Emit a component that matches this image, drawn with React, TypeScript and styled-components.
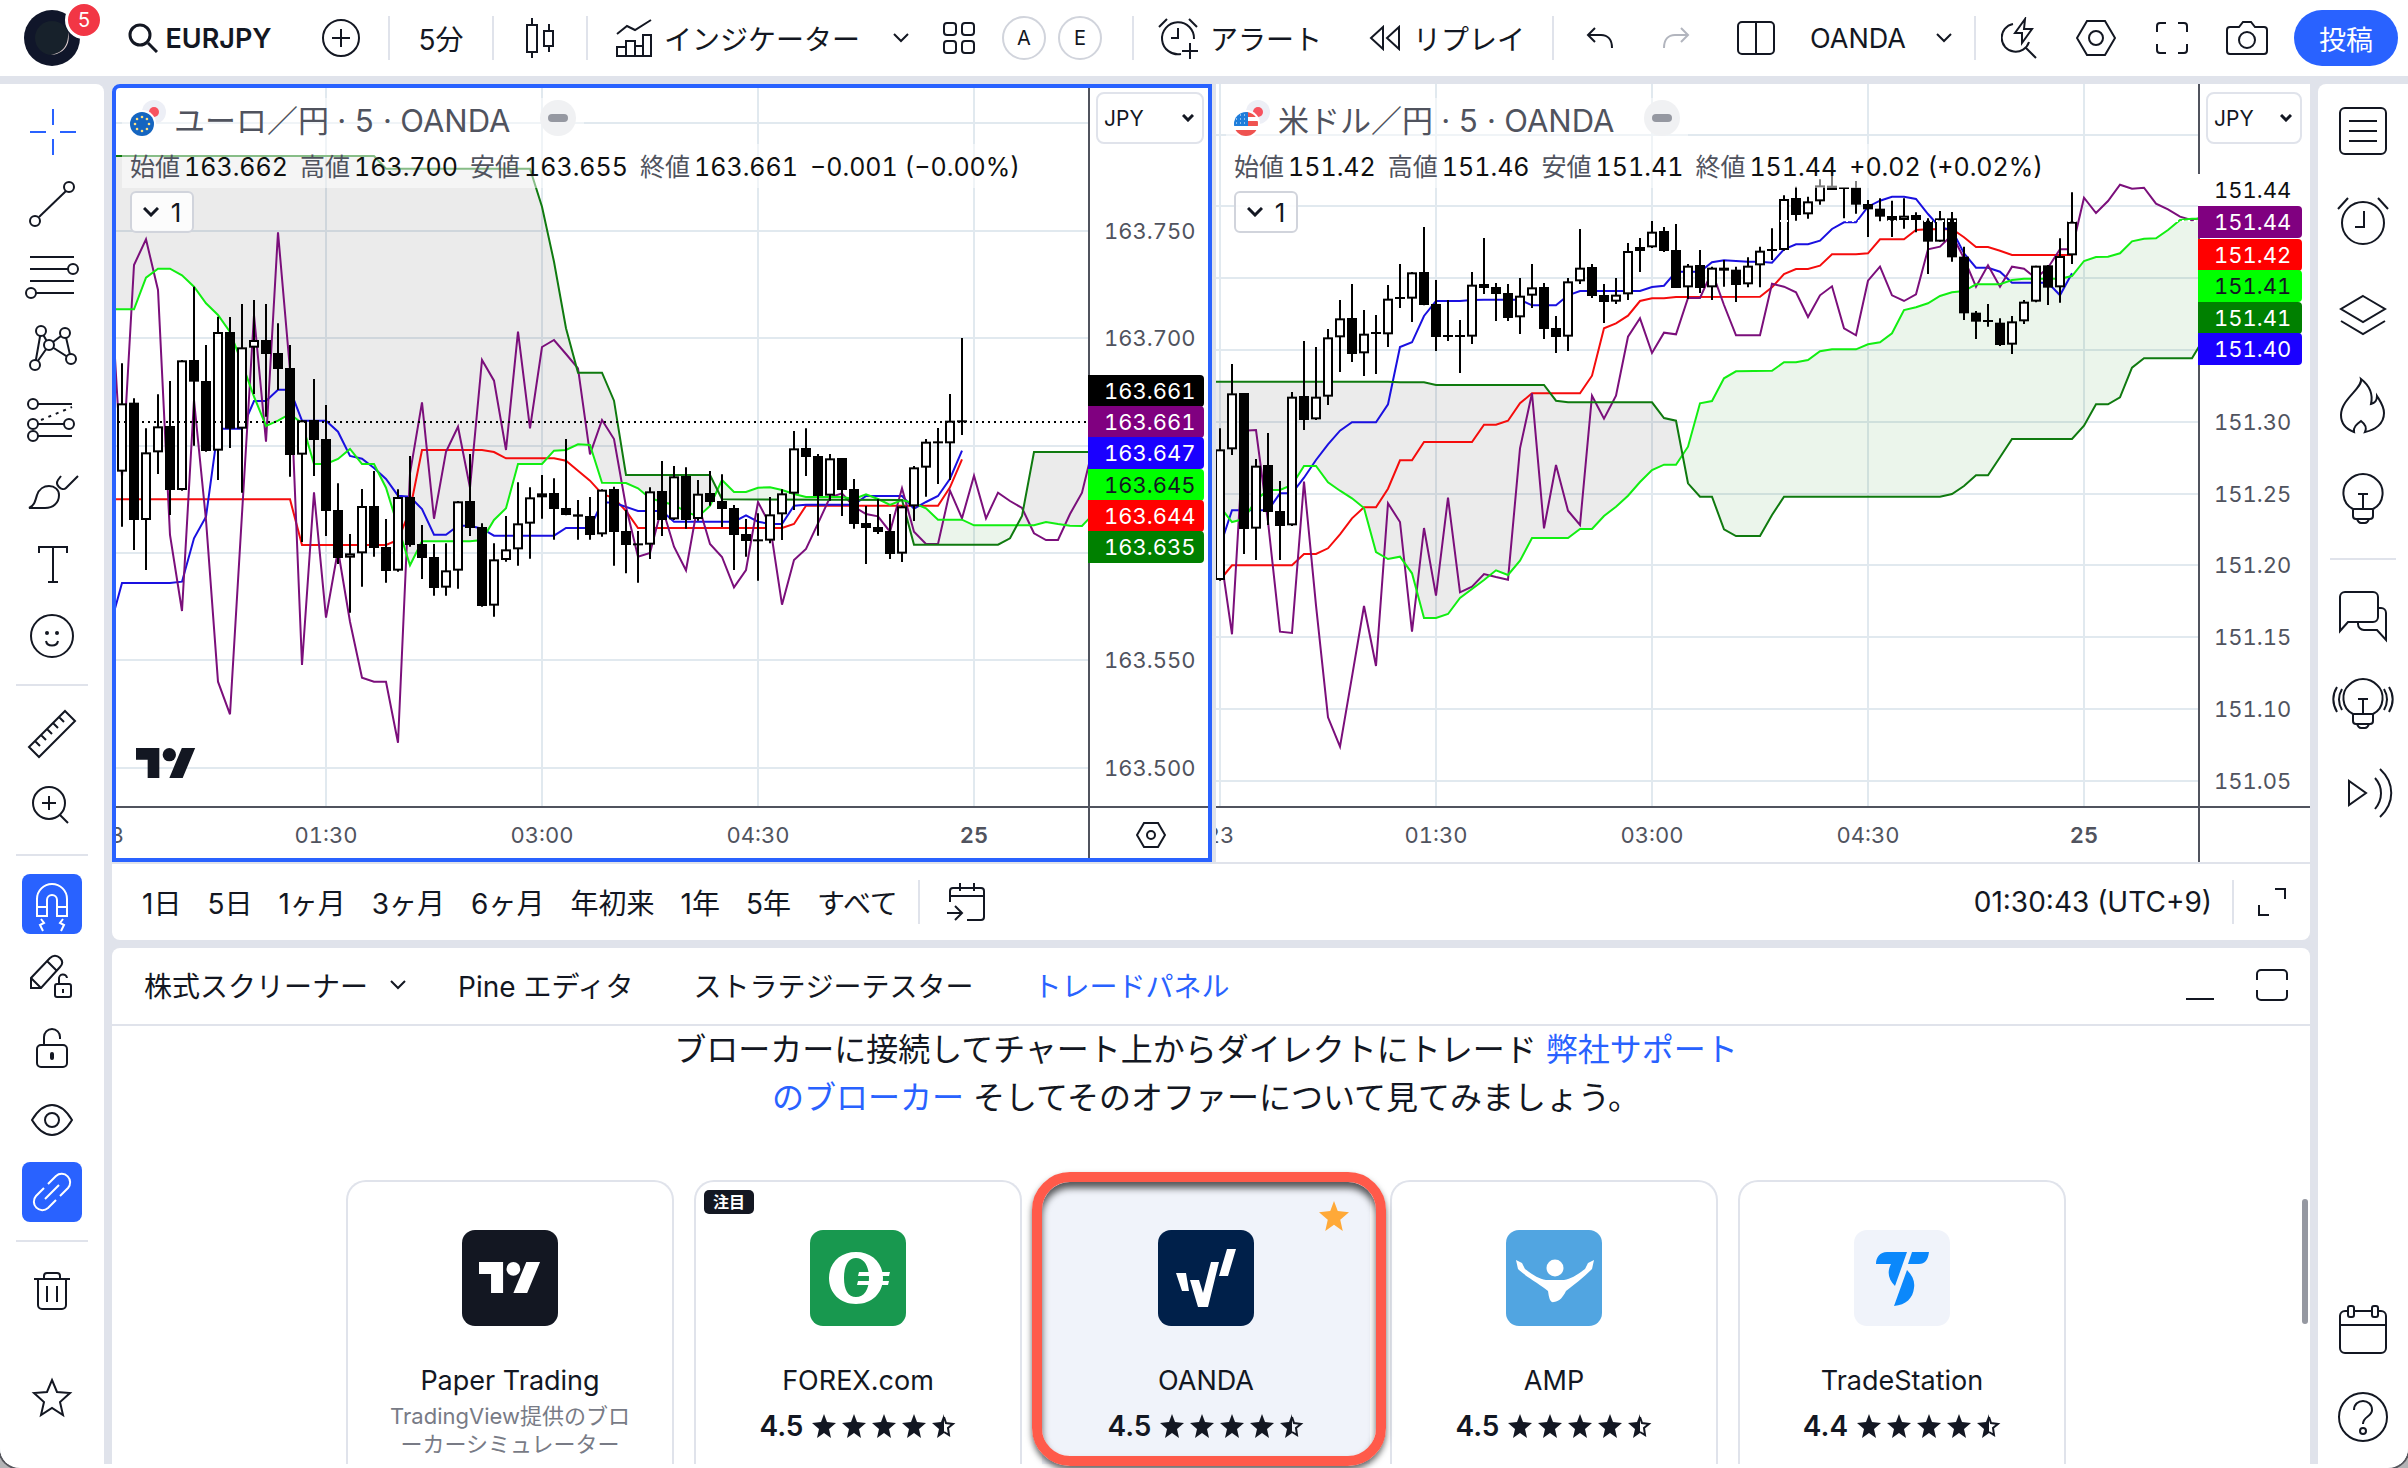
import React from "react";
import styled, { createGlobalStyle, css } from "styled-components";

const ink = "#131722";
const line = "#e0e3eb";
const blue = "#2962ff";
const sans = `Inter, "Noto Sans CJK JP", sans-serif`;

const GlobalStyle = createGlobalStyle`
  * { box-sizing: border-box; }
  html { background: #b4b4b6; }
  body { margin: 0; font-family: ${sans}; color: ${ink}; }
  button, select { font: inherit; color: inherit; background: none; border: 0; padding: 0; margin: 0; cursor: pointer; }
  a { color: ${blue}; text-decoration: none; }
  svg { display: block; flex: none; }
`;

/* ---------- page frame ---------- */

const Shell = styled.div`
  display: flex;
  flex-direction: column;
  height: 100vh;
  padding-bottom: 4px;
  background: #fff;
  border-radius: 0 0 20px 20px;
  box-shadow: 0 0 0 2px #55565c;
  overflow: hidden;
`;

const Body = styled.div`
  flex: 1;
  min-height: 0;
  display: grid;
  grid-template-columns: 104px minmax(0, 1fr) 90px;
  gap: 8px;
  padding-top: 8px;
  background: ${line};
`;

const Center = styled.main`
  display: flex;
  flex-direction: column;
  min-height: 0;
`;

/* ---------- top bar ---------- */

const TopBar = styled.header`
  flex: none;
  display: flex;
  align-items: center;
  height: 76px;
  padding-right: 10px;
  background: #fff;
`;

const BarButton = styled.button<{ $w: number; $gap?: number; $latin?: boolean; $strong?: boolean }>`
  flex: none;
  width: ${(p) => p.$w}px;
  height: 60px;
  display: flex;
  align-items: center;
  justify-content: center;
  gap: ${(p) => p.$gap ?? 0}px;
  font-size: ${(p) => (p.$latin ? 27 : 28)}px;
  font-weight: ${(p) => (p.$strong ? 600 : 400)};
  white-space: nowrap;
`;

const BarDivider = styled.span`
  flex: none;
  width: 2px;
  height: 44px;
  margin: 0 2px;
  background: ${line};
`;

const BarSpace = styled.span`
  flex: 1;
`;

const AvatarButton = styled.button`
  position: relative;
  flex: none;
  width: 104px;
  height: 60px;
  display: flex;
  align-items: center;
  justify-content: center;
`;

const Badge = styled.span`
  position: absolute;
  top: -7px;
  right: 1px;
  width: 38px;
  height: 38px;
  border: 3px solid #fff;
  border-radius: 50%;
  background: #f23645;
  color: #fff;
  font-size: 20px;
  line-height: 32px;
  text-align: center;
`;

const LetterGroup = styled.div`
  display: flex;
  gap: 12px;
  width: 128px;
`;

const LetterButton = styled.button`
  width: 44px;
  height: 44px;
  border: 2px solid #d1d4dc;
  border-radius: 50%;
  font-size: 20px;
`;

const PublishButton = styled.button`
  flex: none;
  width: 104px;
  height: 56px;
  margin-left: 12px;
  border-radius: 28px;
  background: ${blue};
  color: #fff;
  font-size: 27px;
`;

/* ---------- side bars ---------- */

const SideBar = styled.nav<{ $side: "left" | "right" }>`
  display: flex;
  flex-direction: column;
  align-items: center;
  background: #fff;
  ${(p) =>
    p.$side === "left"
      ? css`
          padding: 12px 0 30px;
          border-radius: 0 8px 0 0;
        `
      : css`
          padding: 0 0 2px;
          border-radius: 8px 0 0 0;
        `}
`;

const ToolButton = styled.button<{ $h: number; $active?: boolean; $end?: boolean }>`
  flex: none;
  height: ${(p) => p.$h}px;
  display: flex;
  align-items: center;
  margin-top: ${(p) => (p.$end ? "auto" : "0")};
  color: ${(p) => (p.$active ? "#fff" : ink)};
`;

const ToolFace = styled.span<{ $on?: boolean }>`
  display: flex;
  align-items: center;
  justify-content: center;
  width: 60px;
  height: 60px;
  border-radius: 8px;
  background: ${(p) => (p.$on ? blue : "transparent")};
`;

const SideDivider = styled.span<{ $w: number }>`
  flex: none;
  width: ${(p) => p.$w}px;
  height: 2px;
  margin: 12px 0;
  background: ${line};
`;

/* ---------- chart panes ---------- */

const Charts = styled.section`
  flex: 1;
  min-height: 0;
  display: grid;
  grid-template-columns: 1100fr 1094fr;
  gap: 4px;
`;

const Pane = styled.article<{ $axis: number; $selected?: boolean }>`
  position: relative;
  min-height: 0;
  display: grid;
  grid-template-columns: minmax(0, 1fr) ${(p) => p.$axis}px;
  grid-template-rows: minmax(0, 1fr) 56px;
  background: #fff;
  font-variant-numeric: tabular-nums;
  ${(p) =>
    p.$selected &&
    css`
      border-radius: 8px 0 0 0;
      &::after {
        content: "";
        position: absolute;
        inset: 0;
        border: 4px solid ${blue};
        border-radius: 8px 0 0 0;
        pointer-events: none;
      }
    `}
`;

const Plot = styled.div`
  position: relative;
  min-height: 0;
  overflow: hidden;
`;

const PlotSvg = styled.svg`
  width: 100%;
  height: 100%;
`;

const Watermark = styled.svg`
  position: absolute;
  left: 24px;
  bottom: 28px;
`;

const PriceAxis = styled.div`
  position: relative;
  border-left: 2px solid #50535e;
`;

const PriceTag = styled.span<{ $bg?: string; $color?: string }>`
  position: absolute;
  left: -2px;
  right: 8px;
  height: 32px;
  margin-top: -16px;
  padding-left: 16px;
  border-radius: 0 4px 4px 0;
  background: ${(p) => p.$bg ?? "transparent"};
  color: ${(p) => p.$color ?? "#50535e"};
  font-size: 22px;
  line-height: 33px;
`;

const CurrencyBox = styled.div`
  position: relative;
  margin: 8px 8px 0 6px;
  svg {
    position: absolute;
    top: 22px;
    right: 10px;
    pointer-events: none;
  }
`;

const CurrencySelect = styled.select`
  appearance: none;
  width: 100%;
  height: 52px;
  padding-left: 6px;
  border: 2px solid ${line};
  border-radius: 8px;
  background: #fff;
  font-size: 21px;
`;

const TimeAxis = styled.div`
  position: relative;
  overflow: hidden;
  border-top: 2px solid #50535e;
`;

const TimeTag = styled.span<{ $bold?: boolean }>`
  position: absolute;
  top: 0;
  transform: translateX(-50%);
  color: #50535e;
  font-size: 22px;
  line-height: 54px;
  font-weight: ${(p) => (p.$bold ? 600 : 400)};
`;

const AxisCorner = styled.div`
  display: flex;
  align-items: center;
  justify-content: center;
  border-top: 2px solid #50535e;
  border-left: 2px solid #50535e;
`;

const Legend = styled.div`
  position: absolute;
  top: 14px;
  left: 10px;
  display: flex;
  flex-direction: column;
  align-items: flex-start;
  white-space: nowrap;
`;

const LegendTitle = styled.h2`
  display: flex;
  align-items: center;
  gap: 8px;
  height: 46px;
  margin: 0;
  padding: 0 8px 6px;
  background: rgba(255, 255, 255, 0.5);
  color: #50535e;
  font-size: 31px;
  font-weight: 400;
`;

const DashButton = styled.button`
  display: flex;
  align-items: center;
  justify-content: center;
  width: 36px;
  height: 36px;
  margin-left: 22px;
  border-radius: 50%;
  background: #f0f1f3;
`;

const LegendValues = styled.div`
  display: flex;
  gap: 12px;
  height: 44px;
  padding: 0 8px;
  background: rgba(255, 255, 255, 0.5);
  color: #0f0f0f;
  font-size: 25px;
  line-height: 46px;
`;

const LegendPair = styled.span`
  display: flex;
  gap: 4px;
`;

const LegendKey = styled.span`
  color: #50535e;
`;

const CountButton = styled.button`
  display: flex;
  align-items: center;
  justify-content: center;
  gap: 12px;
  width: 64px;
  height: 42px;
  margin: 3px 0 0 8px;
  border: 2px solid #d1d4dc;
  border-radius: 6px;
  background: rgba(255, 255, 255, 0.85);
  font-size: 26px;
  font-variant-numeric: normal;
`;

/* ---------- range bar ---------- */

const RangeBar = styled.div`
  flex: none;
  display: flex;
  align-items: center;
  height: 78px;
  padding: 0 24px 0 30px;
  margin-bottom: 8px;
  border-top: 2px solid ${line};
  border-radius: 0 0 8px 8px;
  background: #fff;
  font-size: 28px;
`;

const RangeList = styled.div`
  display: flex;
  gap: 26px;
`;

const RangeDivider = styled.span<{ $before: number; $after: number }>`
  width: 2px;
  height: 44px;
  margin: 0 ${(p) => p.$after}px 0 ${(p) => p.$before}px;
  background: ${line};
`;

/* ---------- bottom panel ---------- */

const Panel = styled.section`
  position: relative;
  flex: none;
  display: flex;
  flex-direction: column;
  height: 516px;
  padding-right: 10px;
  border-radius: 8px 8px 0 0;
  background: #fff;
`;

const PanelTabs = styled.div`
  flex: none;
  display: flex;
  align-items: center;
  height: 78px;
  margin-right: -10px;
  padding: 0 22px 2px 32px;
  border-bottom: 2px solid ${line};
  font-size: 28px;
`;

const PanelTab = styled.button<{ $current?: boolean; $first?: boolean }>`
  height: 60px;
  padding: ${(p) => (p.$first ? "0" : "0 30px")};
  color: ${(p) => (p.$current ? blue : ink)};
`;

const TabArrow = styled.button`
  display: flex;
  align-items: center;
  justify-content: center;
  width: 60px;
  height: 60px;
`;

const PanelTools = styled.div`
  display: flex;
  align-items: center;
  gap: 42px;
  margin-left: auto;
`;

const Intro = styled.p`
  width: 1080px;
  max-width: 100%;
  margin: 0 auto 58px;
  font-size: 32px;
  line-height: 48px;
  text-align: center;
`;

const Brokers = styled.div`
  flex: 1;
  display: flex;
  justify-content: center;
  gap: 20px;
`;

const BrokerCard = styled.article<{ $picked?: boolean }>`
  position: relative;
  display: flex;
  flex-direction: column;
  align-items: center;
  width: 328px;
  padding-top: 48px;
  border: 2px solid ${(p) => (p.$picked ? "#f0f3fa" : line)};
  border-bottom: 0;
  border-radius: 20px 20px 0 0;
  background: ${(p) => (p.$picked ? "#f0f3fa" : "#fff")};
`;

const BrokerName = styled.h3`
  margin: 37px 0 0;
  font-size: 27px;
  font-weight: 400;
  line-height: 36px;
`;

const BrokerNote = styled.p`
  width: 250px;
  margin: 3px 0 0;
  color: #787b86;
  font-size: 22px;
  line-height: 28px;
  text-align: center;
`;

const Rating = styled.div`
  display: flex;
  align-items: center;
  gap: 6px;
  margin-top: 12px;
  font-size: 28px;
  font-weight: 600;
  line-height: 30px;
`;

const RatingValue = styled.span`
  margin-right: 3px;
`;

const Featured = styled.span`
  position: absolute;
  top: 8px;
  left: 8px;
  width: 50px;
  height: 24px;
  border-radius: 5px;
  background: ${ink};
  color: #fff;
  font-size: 16px;
  font-weight: 700;
  line-height: 24px;
  text-align: center;
`;

const Favourite = styled.svg`
  position: absolute;
  top: 19px;
  right: 19px;
`;

const Highlight = styled.span`
  position: absolute;
  z-index: 2;
  top: -10px;
  left: -12px;
  right: -18px;
  bottom: -2px;
  border: 10px solid #ff5a4a;
  border-radius: 38px;
  box-shadow: 0 4px 6px rgba(0, 0, 0, 0.6), inset 0 6px 7px rgba(0, 0, 0, 0.65);
  pointer-events: none;
`;

const ScrollThumb = styled.span`
  position: absolute;
  top: 251px;
  right: 2px;
  width: 6px;
  height: 125px;
  border-radius: 3px;
  background: #9598a1;
`;

/* ---------- icons ---------- */

type IconProps = { w: number; h?: number; d?: string; sw?: number; color?: string; children?: React.ReactNode };

const Icon = ({ w, h = w, d, sw = 2, color = "currentColor", children }: IconProps) => (
  <svg width={w} height={h} viewBox={`0 0 ${w} ${h}`} fill="none" stroke={color} strokeWidth={sw} aria-hidden="true">
    {d && <path d={d} />}
    {children}
  </svg>
);

const Chevron = ({ sw = 2 }: { sw?: number }) => <Icon w={16} h={10} sw={sw} d="M1 1l7 7 7-7" />;

const dots = (points: number[][], r: number, fill = "none") =>
  points.map(([x, y]) => <circle key={`${x}-${y}`} cx={x} cy={y} r={r} fill={fill} />);

const Bulb = ({ waves }: { waves?: boolean }) => (
  <Icon w={64} d="M22 42C10 36 10 20 18 13 26 5 38 5 46 13 54 20 54 36 42 42zM22 42v7a3 3 0 0 0 3 3h14a3 3 0 0 0 3-3v-7M26 52c1 3 2 4 4 4h4c2 0 3-1 4-4M27 27h10M32 27v15">
    {waves && <path d="M6 15c-5 8-5 16 0 25M11 17c-4 7-4 14 0 21M58 15c5 8 5 16 0 25M53 17c4 7 4 14 0 21" />}
  </Icon>
);

const tools: { label: string; icon: React.ReactNode; on?: boolean; rule?: boolean }[] = [
  { label: "十字カーソル", icon: <Icon w={56} color={blue} d="M29 5v16M29 35v16M6 28h16M36 28h16" /> },
  { label: "トレンドライン", icon: <Icon w={56} d="M15 41 42 15">{dots([[11, 45], [45, 11]], 5)}</Icon> },
  { label: "フィボナッチ", icon: <Icon w={56} d="M6 9h44M6 21h38M6 33h44M12 45h38">{dots([[49, 21], [7, 45]], 5)}</Icon> },
  {
    label: "パターン",
    icon: (
      <Icon w={56} d="M11 45 17 11 25 25 41 13 47 39 25 25z">
        {dots([[17, 11], [41, 13], [25, 25], [11, 45], [47, 39]], 5, "#fff")}
      </Icon>
    ),
  },
  {
    label: "予測",
    icon: (
      <Icon w={56} d="M14 12h34M14 32h26M14 44h34">
        {dots([[9, 12], [9, 32], [45, 32], [9, 44]], 5)}
        <path d="M17 28 48 15" strokeDasharray="3 5" />
      </Icon>
    ),
  },
  {
    label: "ブラシ",
    icon: <Icon w={56} d="M5 44c5-2 6-6 8-13 2-6 7-9 12-9 6 0 10 4 10 9 0 8-6 13-14 13zM37 12l-3 4c-2 3-1 5 1 7s5 3 7 1L54 12" />,
  },
  { label: "テキスト", icon: <Icon w={56} d="M15 17v-6h28v6M29 11v35M24 46h10" /> },
  {
    label: "アイコン",
    rule: true,
    icon: (
      <Icon w={56} d="M22 33c1 6 11 6 12 0">
        <circle cx="28" cy="28" r="21" />
        <g stroke="none" fill="currentColor">{dots([[23, 25], [33, 25]], 2, "currentColor")}</g>
      </Icon>
    ),
  },
  { label: "計測", icon: <Icon w={56} d="M41 5 51 15 15 51 5 41zM11 35l5 5M17 29l5 5M23 23l5 5M29 17l5 5M35 11l5 5" /> },
  {
    label: "ズームイン",
    rule: true,
    icon: (
      <Icon w={56} d="M25 18v14M18 25h14M36 37l8 8">
        <circle cx="25" cy="25" r="16" />
      </Icon>
    ),
  },
  {
    label: "マグネット",
    on: true,
    icon: <Icon w={56} d="M13 40V23a15 15 0 0 1 30 0v17H33V24a5 5 0 0 0-10 0v16zM13 31h10M33 31h10M17 43l3 4-4 2 3 6M39 43l-3 4 4 2-3 6" />,
  },
  {
    label: "描画モードを維持",
    icon: (
      <Icon w={56} d="M7 40V30L26 10c3-3 7-3 10 0s3 6 0 9L17 40zM23 13l10 10M7 30l10 10M35 36v-5a4 4 0 0 1 8-1M39 41v4">
        <rect x="31" y="36" width="16" height="13" rx="2" />
      </Icon>
    ),
  },
  {
    label: "描画をロック",
    icon: (
      <Icon w={56} d="M20 25v-8a8 8 0 0 1 16 0v2">
        <rect x="13" y="25" width="30" height="22" rx="4" />
        <rect x="27" y="33" width="2" height="6" rx="1" />
      </Icon>
    ),
  },
  {
    label: "描画を非表示",
    icon: (
      <Icon w={56} d="M8 28c6-10 12-15 20-15s14 5 20 15c-6 10-12 15-20 15S14 38 8 28z">
        <circle cx="28" cy="28" r="7" />
      </Icon>
    ),
  },
  {
    label: "描画を同期",
    on: true,
    rule: true,
    icon: <Icon w={56} d="M24 20l8-8a8.500 8.500 0 0 1 12 12l-8 8M32 36l-8 8a8.500 8.500 0 0 1-12-12l8-8M21 35l14-14" />,
  },
  {
    label: "削除",
    icon: <Icon w={56} d="M10 17h36M20 17v-3a3 3 0 0 1 3-3h10a3 3 0 0 1 3 3v3M14 17v26a4 4 0 0 0 4 4h20a4 4 0 0 0 4-4V17M23 24v16M33 24v16" />,
  },
  {
    label: "お気に入り",
    icon: <Icon w={56} d="M28 10l5 12 13 1-10 9 3 13-11-7-11 7 3-13-10-9 13-1z" />,
  },
];

const widgets: { label: string; icon: React.ReactNode; h: number; rule?: boolean; end?: boolean }[] = [
  {
    label: "ウォッチリスト",
    h: 92,
    icon: (
      <Icon w={64} d="M18 23h28M18 33h28M18 43h28">
        <rect x="9" y="10" width="46" height="46" rx="5" />
      </Icon>
    ),
  },
  {
    label: "アラート",
    h: 92,
    icon: (
      <Icon w={64} d="M33 21v16h-9M7 19 17 8M47 8l10 11">
        <circle cx="32" cy="33" r="21" />
      </Icon>
    ),
  },
  { label: "オブジェクトツリー", h: 92, icon: <Icon w={64} d="M32 14 54 27 32 40 10 27zM10 39l22 13 22-13" /> },
  {
    label: "ホットリスト",
    h: 92,
    icon: <Icon w={64} d="M30 5c2 9-20 20-20 36 0 8 5 14 13 17-1-5 3-8 7-11 4 3 6 7 4 11 10-2 19-8 19-19 0-7-4-12-7-17 0 4-2 7-6 8 2-9-1-18-10-25z" />,
  },
  { label: "アイデア", h: 94, rule: true, icon: <Bulb /> },
  {
    label: "チャット",
    h: 88,
    icon: <Icon w={64} d="M9 47V13a5 5 0 0 1 5-5h28a5 5 0 0 1 5 5v20a5 5 0 0 1-5 5H17zM47 24h3a5 5 0 0 1 5 5v27l-9-10H33a6 6 0 0 1-6-6v-2" />,
  },
  { label: "アイデアストリーム", h: 88, icon: <Bulb waves /> },
  { label: "ストリーム", h: 90, icon: <Icon w={64} d="M18 20v24l17-12zM44 17c8 9 8 21 0 31M49 8c15 14 15 34 0 48" /> },
  {
    label: "カレンダー",
    h: 88,
    end: true,
    icon: (
      <Icon w={64} d="M9 27h46">
        <rect x="9" y="13" width="46" height="42" rx="5" />
        <rect x="17" y="8" width="6" height="11" rx="2" fill="#fff" />
        <rect x="41" y="8" width="6" height="11" rx="2" fill="#fff" />
      </Icon>
    ),
  },
  {
    label: "ヘルプ",
    h: 88,
    icon: (
      <Icon w={64} d="M23 24c0-12 18-12 18 0 0 7-9 6-9 14">
        <circle cx="32" cy="31" r="24" />
        <circle cx="32" cy="45" r="3" />
      </Icon>
    ),
  },
];

const TvMark = ({ as: Tag = "svg" as any, color = ink }: { as?: any; color?: string }) => (
  <Tag width="60" height="30" viewBox="0 4 36 18" fill={color} aria-label="TradingView">
    <path d="M14 22H7V11H0V4h14v18zM28 22h-8l7.500-18h8L28 22z" />
    <circle cx="20" cy="8" r="4" />
  </Tag>
);

const Flags = ({ base }: { base: "eu" | "us" }) => (
  <svg width="36" height="36" viewBox="0 0 36 36" aria-hidden="true">
    <circle cx="24" cy="12" r="12" fill="#edeff6" />
    <circle cx="24" cy="12" r="5" fill="#f7525f" />
    <circle cx="12" cy="24" r="14" fill="#fff" />
    {base === "eu" ? (
      <>
        <circle cx="12" cy="24" r="12" fill="#1565c0" />
        <g fill="#ffe082">
          {Array.from({ length: 8 }, (_, i) => (
            <circle key={i} cx={12 + 7 * Math.cos((i * Math.PI) / 4)} cy={24 + 7 * Math.sin((i * Math.PI) / 4)} r="1.300" />
          ))}
        </g>
      </>
    ) : (
      <>
        <clipPath id="us-disc">
          <circle cx="12" cy="24" r="12" />
        </clipPath>
        <g clipPath="url(#us-disc)">
          <path fill="#fff" d="M0 12h24v24H0z" />
          <path fill="#ef5350" d="M12 12h12v5H12zM12 21h12v5H12zM0 30h24v6H0z" />
          <path fill="#1e7ddb" d="M0 12h14v14H0z" />
          <path stroke="#fff" strokeDasharray="1 3" d="M2 15h11M2 19h11M2 23h11" />
        </g>
      </>
    )}
  </svg>
);

/* ---------- chart data and drawing ---------- */

type Point = [number, number];
// high, body top, body bottom, low, filled
type Candle = [number, number, number, number, 0 | 1];

type Tag = { at: number; text: string; bg?: string; color?: string };

type ChartModel = {
  box: [number, number, number, number];
  first: number;
  zero: number;
  rows: number[];
  columns: number[];
  candles: Candle[];
  base: Point[];
  conversion: Point[];
  lagging: Point[];
  spanA: Point[];
  spanB: Point[];
  priceLine: { y: number; color: string };
  tags: Tag[];
  times: { at: number; text: string; bold?: boolean }[];
};

const seq = (from: number, values: number[]): Point[] => values.map((v, i) => [from + i, v]);

const euro: ChartModel = {
  box: [112, 84, 976, 722],
  first: 122,
  zero: 260,
  rows: [123, 231, 338, 446, 553, 660, 768],
  columns: [326, 542, 758, 974],
  candles: [
    [310, 430, 635, 800, 0], [415, 428, 780, 870, 1], [505, 577, 780, 930, 0], [403, 499, 577, 642, 0],
    [363, 498, 690, 765, 1], [300, 301, 690, 692, 0], [80, 300, 365, 557, 1], [255, 363, 573, 575, 1],
    [170, 216, 572, 660, 0], [171, 216, 506, 564, 1], [132, 262, 506, 698, 0], [120, 240, 263, 402, 0],
    [132, 240, 282, 470, 1], [190, 279, 327, 390, 1], [255, 324, 585, 650, 1], [480, 481, 584, 846, 0],
    [357, 480, 540, 648, 1], [435, 537, 753, 828, 1], [670, 750, 894, 912, 1], [822, 880, 893, 1058, 0],
    [687, 738, 880, 980, 0], [633, 738, 864, 890, 1], [777, 861, 933, 968, 1], [688, 711, 932, 935, 0],
    [588, 711, 855, 860, 1], [795, 852, 894, 957, 1], [852, 891, 984, 1007, 1], [850, 931, 983, 1007, 0],
    [723, 724, 932, 986, 0], [582, 723, 804, 828, 1], [790, 801, 1038, 1040, 1], [850, 898, 1037, 1070, 0],
    [768, 868, 900, 905, 0], [667, 790, 868, 917, 0], [682, 712, 791, 896, 0], [645, 700, 712, 776, 0],
    [655, 699, 747, 839, 1], [537, 744, 765, 766, 1], [720, 763, 770, 839, 1], [711, 768, 825, 839, 1],
    [688, 689, 823, 830, 0], [680, 687, 816, 917, 1], [750, 813, 855, 940, 1], [813, 850, 854, 968, 1],
    [682, 694, 854, 897, 0], [603, 693, 780, 828, 1], [618, 649, 778, 780, 0], [622, 648, 780, 806, 1],
    [660, 701, 777, 782, 0], [633, 699, 726, 737, 1], [643, 723, 747, 801, 1], [735, 744, 825, 930, 1],
    [777, 822, 843, 890, 1], [760, 838, 842, 962, 1], [711, 763, 842, 850, 0], [688, 700, 763, 840, 0],
    [513, 565, 701, 750, 0], [505, 564, 591, 648, 1], [582, 588, 708, 827, 1], [582, 595, 707, 722, 0],
    [594, 594, 690, 768, 1], [657, 687, 792, 806, 1], [738, 789, 804, 912, 1], [718, 801, 816, 822, 1],
    [762, 813, 882, 897, 1], [738, 739, 881, 906, 0], [618, 622, 739, 783, 0], [537, 545, 623, 710, 0],
    [504, 544, 550, 672, 1], [402, 482, 550, 660, 0], [234, 481, 487, 525, 1],
  ],
  base: [
    [-1, 718], [14, 718], [15, 855], [22, 855], [23, 840], [24, 750], [25, 570], [30, 570], [31, 576], [32, 595],
    [36, 595], [37, 602], [38, 632], [39, 662], [40, 702], [41, 714], [42, 753], [43, 804], [55, 804], [56, 792],
    [57, 737], [68, 737], [69, 682], [70, 598],
  ],
  conversion: [
    [-1, 1100], [0, 969], [4, 969], [5, 965], [6, 835], [7, 770], [8, 506], [10, 506], [11, 423], [12, 423],
    [13, 389], [14, 389], [15, 482], [17, 482], [18, 515], [19, 588], [20, 596], [21, 624], [22, 657], [23, 707],
    [24, 710], [25, 747], [26, 824], [27, 824], [28, 797], [29, 797], [30, 806], [31, 827], [36, 827], [37, 804],
    [39, 804], [40, 727], [41, 728], [43, 753], [45, 753], [46, 785], [51, 785], [52, 766], [53, 785], [54, 792],
    [55, 792], [56, 737], [57, 734], [61, 734], [62, 708], [65, 708], [66, 746], [67, 726], [68, 708], [69, 656],
    [70, 572],
  ],
  spanA: [
    [-1, 148], [1, 148], [2, 53], [3, 26], [4, 26], [5, 46], [6, 80], [7, 130], [8, 165], [9, 216], [10, 310],
    [11, 410], [12, 498], [13, 482], [14, 462], [15, 490], [16, 612], [17, 612], [18, 597], [19, 567], [20, 612],
    [21, 612], [22, 683], [23, 800], [24, 916], [25, 844], [29, 844], [30, 840], [31, 780], [32, 745], [33, 612],
    [35, 612], [36, 572], [37, 570], [38, 553], [39, 555], [40, 668], [42, 669], [43, 685], [44, 715], [45, 725],
    [46, 735], [47, 755], [48, 770], [49, 738], [50, 660], [51, 696], [52, 696], [53, 683], [54, 682], [55, 690],
    [56, 702], [57, 711], [60, 711], [61, 717], [62, 703], [63, 717], [64, 735], [65, 720], [66, 730], [67, 745],
    [68, 779], [70, 779], [71, 796], [76, 796], [77, 786], [78, 792], [79, 797], [80, 798], [81, 760],
  ],
  spanB: [
    [-1, -312], [21, -312], [22, -274], [34, -274], [35, -160], [36, 5], [37, 205], [38, 338], [40, 338], [41, 422],
    [42, 645], [49, 645], [50, 718], [65, 720], [66, 854], [73, 854], [74, 835], [75, 768], [76, 576], [81, 576],
  ],
  lagging: seq(-1, [
    40, 650, 15, -62, 90, 825, 1053, 420, 780, 1265, 1363, 762, 165, 545, -83, 330, 1215, 697, 1073, 870, 1085, 1253,
    1265, 1265, 1448, 640, 427, 776, 575, 500, 683, 300, 362, 570, 215, 505, 261, 240, 282, 325, 583, 480, 537, 740,
    890, 879, 740, 860, 931, 730, 852, 891, 982, 930, 726, 795, 1034, 900, 867, 790, 712, 700, 740, 762, 769, 815,
    685, 815, 852, 852, 692, 775, 647, 775, 698, 723, 744, 820, 840, 840, 762, 698, 550,
  ]),
  priceLine: { y: 422, color: "#000" },
  tags: [
    { at: 231, text: "163.750" },
    { at: 338, text: "163.700" },
    { at: 660, text: "163.550" },
    { at: 768, text: "163.500" },
    { at: 391, text: "163.661", bg: "#000", color: "#fff" },
    { at: 422, text: "163.661", bg: "#800080", color: "#fff" },
    { at: 453, text: "163.647", bg: "#1a00ff", color: "#fff" },
    { at: 485, text: "163.645", bg: "#00ff00", color: ink },
    { at: 516, text: "163.644", bg: "#ff0000", color: "#fff" },
    { at: 547, text: "163.635", bg: "#008000", color: "#fff" },
  ],
  times: [
    { at: 110, text: "23" },
    { at: 326, text: "01:30" },
    { at: 542, text: "03:00" },
    { at: 758, text: "04:30" },
    { at: 974, text: "25", bold: true },
  ],
};

const dollar: ChartModel = {
  box: [1216, 84, 982, 722],
  first: 1220,
  zero: 200,
  rows: [135, 206, 278, 350, 422, 494, 565, 637, 709, 781],
  columns: [1220, 1436, 1652, 1868, 2084],
  candles: [
    [685, 748, 1140, 1142, 0], [492, 580, 748, 765, 0], [579, 579, 987, 1062, 1], [777, 797, 986, 1080, 0],
    [699, 795, 936, 975, 1], [843, 933, 978, 1080, 1], [576, 590, 976, 978, 0], [423, 588, 660, 690, 1],
    [441, 590, 658, 660, 0], [387, 412, 590, 615, 0], [300, 355, 412, 516, 0], [252, 354, 462, 486, 1],
    [330, 401, 460, 528, 0], [345, 396, 401, 522, 1], [255, 296, 403, 441, 0], [192, 291, 296, 324, 1],
    [216, 217, 296, 366, 0], [81, 216, 315, 316, 1], [240, 312, 411, 453, 1], [300, 405, 410, 423, 1],
    [360, 405, 410, 519, 1], [216, 254, 410, 432, 0], [114, 252, 264, 282, 1], [249, 261, 282, 363, 1],
    [252, 279, 354, 363, 1], [234, 287, 352, 402, 0], [192, 262, 287, 324, 0], [249, 261, 387, 417, 1],
    [348, 384, 411, 459, 1], [234, 244, 410, 453, 0], [87, 203, 244, 252, 0], [192, 201, 288, 294, 1],
    [252, 285, 306, 369, 1], [234, 284, 305, 312, 0], [129, 153, 283, 300, 0], [114, 141, 153, 216, 1],
    [63, 95, 142, 144, 0], [81, 93, 153, 156, 1], [72, 150, 264, 264, 1], [192, 197, 262, 297, 0],
    [150, 195, 264, 279, 1], [200, 203, 262, 300, 0], [180, 203, 212, 260, 1], [200, 209, 255, 306, 1],
    [172, 197, 253, 262, 0], [140, 152, 196, 262, 0], [85, 147, 152, 180, 1], [-14, -3, 150, 152, 0],
    [-40, -6, 45, 62, 1], [-10, 4, 43, 56, 0], [-62, -44, 4, 14, 0], [-115, -43, -30, -30, 1],
    [-38, -39, -34, 55, 1], [-57, -37, 14, 41, 1], [0, 12, 28, 111, 1], [-5, 26, 50, 64, 1],
    [2, 48, 62, 111, 1], [-5, 47, 60, 86, 0], [37, 45, 60, 97, 1], [55, 62, 125, 222, 1],
    [33, 55, 125, 125, 0], [36, 55, 172, 185, 1], [140, 170, 340, 360, 1], [333, 338, 365, 417, 1],
    [312, 360, 365, 380, 1], [355, 368, 435, 438, 1], [348, 364, 434, 462, 0], [300, 305, 364, 372, 0],
    [197, 197, 305, 307, 0], [195, 196, 263, 315, 1], [115, 168, 262, 308, 0], [-23, 65, 166, 192, 0],
  ],
  base: [
    [0, 1140], [1, 1096], [6, 1096], [7, 1062], [8, 1062], [9, 1045], [10, 1003], [11, 955], [12, 922], [13, 922],
    [14, 866], [15, 781], [16, 781], [17, 726], [21, 726], [22, 674], [23, 674], [24, 662], [25, 610], [26, 580],
    [30, 580], [31, 527], [32, 385], [33, 370], [34, 347], [35, 303], [36, 295], [37, 295], [38, 291], [45, 290],
    [46, 262], [47, 222], [48, 207], [49, 207], [50, 197], [51, 163], [53, 163], [54, 160], [55, 118], [57, 118],
    [58, 90], [59, 88], [61, 87], [62, 112], [63, 141], [64, 141], [65, 152], [66, 165], [71, 165],
  ],
  conversion: [
    [0, 1040], [1, 931], [4, 931], [5, 880], [6, 880], [7, 833], [8, 780], [9, 733], [10, 692], [11, 667], [13, 667],
    [14, 613], [15, 441], [16, 427], [17, 348], [18, 303], [20, 303], [21, 300], [22, 299], [25, 299], [26, 316],
    [28, 316], [29, 286], [30, 273], [35, 273], [36, 261], [37, 257], [38, 215], [40, 215], [41, 187], [42, 181],
    [44, 185], [45, 185], [46, 188], [47, 148], [48, 133], [49, 133], [50, 122], [51, 87], [52, 67], [53, 67],
    [54, 20], [55, 2], [56, -10], [57, -10], [58, -3], [59, 42], [60, 82], [61, 90], [62, 160], [63, 203], [64, 203],
    [65, 215], [66, 248], [69, 248], [70, 286], [71, 220],
  ],
  spanA: [
    [-1, 880], [0, 920], [1, 966], [2, 957], [3, 900], [4, 870], [5, 870], [6, 855], [7, 798], [8, 798], [9, 847],
    [10, 872], [11, 895], [12, 924], [13, 1056], [14, 1077], [15, 1070], [16, 1120], [17, 1254], [18, 1254],
    [19, 1242], [20, 1194], [21, 1167], [22, 1140], [23, 1111], [24, 1125], [25, 1082], [26, 1014], [29, 1014],
    [30, 987], [31, 987], [32, 948], [33, 920], [34, 887], [35, 846], [36, 810], [37, 794], [38, 794], [39, 740],
    [40, 610], [41, 603], [42, 535], [43, 514], [46, 512], [47, 487], [48, 487], [49, 480], [50, 454], [51, 448],
    [53, 448], [54, 433], [55, 427], [56, 400], [57, 330], [58, 322], [59, 310], [60, 288], [61, 277], [62, 273],
    [63, 253], [65, 253], [66, 240], [67, 236], [70, 236], [71, 228], [72, 183], [73, 171], [74, 170], [75, 160],
    [76, 124], [77, 116], [78, 115], [79, 90], [80, 60], [81, 56], [82, 56],
  ],
  spanB: [
    [-1, 545], [14, 545], [15, 547], [17, 547], [18, 555], [27, 555], [28, 602], [29, 607], [36, 607], [37, 654],
    [38, 662], [39, 850], [40, 890], [41, 890], [42, 988], [43, 1008], [45, 1008], [46, 945], [47, 890], [60, 890],
    [61, 882], [62, 858], [63, 826], [64, 826], [65, 772], [66, 717], [71, 717], [72, 677], [73, 613], [74, 613],
    [75, 592], [76, 503], [77, 475], [81, 475], [82, 415],
  ],
  lagging: seq(0, [
    1051, 1303, 692, 690, 965, 1295, 1299, 845, 1216, 1552, 1640, 1430, 1218, 1398, 910, 966, 1295, 984, 1187, 893,
    1177, 1160, 1122, 1131, 1139, 745, 580, 985, 795, 932, 975, 587, 656, 587, 410, 355, 459, 398, 403, 294, 294,
    215, 315, 406, 406, 406, 251, 260, 277, 351, 286, 259, 385, 406, 242, 200, 286, 303, 283, 148, 140, 105, 175,
    260, 196, 260, 200, 206, 235, 203, 148, 148, -7, 39, 3, -46, -34, -37, 11, 28, 50, 61, 50,
  ]),
  priceLine: { y: 221, color: "#fff" },
  tags: [
    { at: 422, text: "151.30" },
    { at: 494, text: "151.25" },
    { at: 565, text: "151.20" },
    { at: 637, text: "151.15" },
    { at: 709, text: "151.10" },
    { at: 781, text: "151.05" },
    { at: 190, text: "151.44", bg: "#fff", color: "#0f0f0f" },
    { at: 222, text: "151.44", bg: "#800080", color: "#fff" },
    { at: 255, text: "151.42", bg: "#ff0000", color: "#fff" },
    { at: 286, text: "151.41", bg: "#00ff00", color: ink },
    { at: 318, text: "151.41", bg: "#008000", color: "#fff" },
    { at: 349, text: "151.40", bg: "#1a00ff", color: "#fff" },
  ],
  times: [
    { at: 1220, text: "23" },
    { at: 1436, text: "01:30" },
    { at: 1652, text: "03:00" },
    { at: 1868, text: "04:30" },
    { at: 2084, text: "25", bold: true },
  ],
};

const valueAt = (series: Point[], i: number) => {
  const next = series.findIndex(([x]) => x >= i);
  if (next <= 0) return series[0][1];
  const [x0, y0] = series[next - 1];
  const [x1, y1] = series[next];
  return y0 + ((y1 - y0) * (i - x0)) / (x1 - x0);
};

// Splits the area between both spans into runs, one polygon for each side that is on top.
const cloudRuns = (a: Point[], b: Point[]) => {
  const end = a[a.length - 1][0];
  const runs: { up: boolean; top: Point[]; bottom: Point[] }[] = [];
  let current: (typeof runs)[number] | null = null;
  for (let i = -1; i <= end; i++) {
    const ya = valueAt(a, i);
    const yb = valueAt(b, i);
    const up = ya < yb;
    if (!current) {
      current = { up, top: [], bottom: [] };
      runs.push(current);
    } else if (current.up !== up) {
      const d0 = valueAt(a, i - 1) - valueAt(b, i - 1);
      const d1 = ya - yb;
      const x = i - 1 + d0 / (d0 - d1);
      const cross: Point = [x, valueAt(a, x)];
      current.top.push(cross);
      current = { up, top: [cross], bottom: [] };
      runs.push(current);
    }
    current.top.push([i, ya]);
    current.bottom.push([i, yb]);
  }
  return runs;
};

const ChartDrawing = ({ model, label }: { model: ChartModel; label: string }) => {
  const [left, top, width, height] = model.box;
  const px = (i: number) => model.first + i * 12;
  const py = (v: number) => model.zero + v / 3;
  const points = (series: Point[]) => series.map(([i, v]) => `${px(i)},${py(v).toFixed(1)}`).join(" ");
  const curves: [Point[], string][] = [
    [model.base, "#f50c0c"],
    [model.conversion, "#1a10e0"],
    [model.lagging, "#7b0f7b"],
    [model.spanA, "#12ee12"],
    [model.spanB, "#0f7a0f"],
  ];
  return (
    <PlotSvg viewBox={model.box.join(" ")} preserveAspectRatio="none" role="img" aria-label={label}>
      <g stroke="#e1e9ef" strokeWidth="2">
        {model.rows.map((y) => (
          <path key={y} d={`M${left} ${y}h${width}`} />
        ))}
        {model.columns.map((x) => (
          <path key={x} d={`M${x} ${top}v${height}`} />
        ))}
      </g>
      {cloudRuns(model.spanA, model.spanB).map((run, i) => (
        <polygon
          key={i}
          points={points([...run.top, ...run.bottom.reverse()])}
          fill={run.up ? "rgba(0,128,0,0.08)" : "rgba(0,0,0,0.08)"}
        />
      ))}
      {curves.map(([series, color]) => (
        <polyline key={color} points={points(series)} fill="none" stroke={color} strokeWidth="2" />
      ))}
      <g stroke="#000" strokeWidth="2">
        {model.candles.map(([high, open, close, low, filled], i) => {
          const x = px(i);
          const bodyTop = py(open);
          const bodyHeight = py(close) - bodyTop;
          return (
            <g key={i}>
              <path d={`M${x} ${py(high)}V${py(low)}`} />
              {filled ? (
                <rect x={x - 5} y={bodyTop} width="10" height={Math.max(2, bodyHeight)} fill="#000" stroke="none" />
              ) : (
                <rect x={x - 4} y={bodyTop + 1} width="8" height={Math.max(2, bodyHeight - 2)} fill="#fff" />
              )}
            </g>
          );
        })}
      </g>
      <path
        d={`M${left} ${model.priceLine.y}h${width}`}
        stroke={model.priceLine.color}
        strokeWidth="2"
        strokeDasharray="2 4"
      />
    </PlotSvg>
  );
};

type PaneProps = {
  model: ChartModel;
  name: string;
  flag: "eu" | "us";
  values: [string, string][];
  change: string;
  axis: number;
  selected?: boolean;
};

const ChartPane = ({ model, name, flag, values, change, axis, selected }: PaneProps) => {
  const [left, top, width, height] = model.box;
  return (
    <Pane $axis={axis} $selected={selected}>
      <Plot>
        <ChartDrawing model={model} label={name} />
        <Legend>
          <LegendTitle>
            <Flags base={flag} />
            {name}
            <DashButton type="button" aria-label="凡例を隠す">
              <Icon w={20} h={8} color="none">
                <rect width="20" height="8" rx="4" fill="#9598a1" />
              </Icon>
            </DashButton>
          </LegendTitle>
          <LegendValues>
            {values.map(([key, value]) => (
              <LegendPair key={key}>
                <LegendKey>{key}</LegendKey>
                {value}
              </LegendPair>
            ))}
            <span>{change}</span>
          </LegendValues>
          <CountButton type="button" aria-label="インジケーターを表示">
            <Chevron sw={3} />1
          </CountButton>
        </Legend>
        {selected && <TvMark as={Watermark} />}
      </Plot>
      <PriceAxis>
        <CurrencyBox>
          <CurrencySelect aria-label={`${name} 通貨`} defaultValue="JPY">
            <option>JPY</option>
          </CurrencySelect>
          <Icon w={12} h={8} sw={3} d="M1 1l5 5 5-5" />
        </CurrencyBox>
        {model.tags.map((tag, i) => (
          <PriceTag key={i} $bg={tag.bg} $color={tag.color} style={{ top: `${((tag.at - top) / height) * 100}%` }}>
            {tag.text}
          </PriceTag>
        ))}
      </PriceAxis>
      <TimeAxis>
        {model.times.map((time) => (
          <TimeTag key={time.at} $bold={time.bold} style={{ left: `${((time.at - left) / width) * 100}%` }}>
            {time.text}
          </TimeTag>
        ))}
      </TimeAxis>
      <AxisCorner>
        {selected && (
          <button type="button" aria-label="スケール設定">
            <Icon w={30} h={26} d="M8 1h14l7 12-7 12H8L1 13z">
              <circle cx="15" cy="13" r="4" />
            </Icon>
          </button>
        )}
      </AxisCorner>
    </Pane>
  );
};

/* ---------- brokers ---------- */

const starPath = "M12 0l3 8 9 1-7 6 2 9-7-5-7 5 2-9-7-6 9-1z";

const Stars = () => (
  <>
    {[0, 1, 2, 3].map((i) => (
      <svg key={i} width="24" height="24" viewBox="0 0 24 24" fill={ink} aria-hidden="true">
        <path d={starPath} />
      </svg>
    ))}
    <svg width="24" height="24" viewBox="0 0 24 24" fill={ink} aria-hidden="true">
      <path d="M12 0v19l-7 5 2-9-7-6 9-1z" />
      <path d="M12 3l2 6 7 1-5 4 1 7-5-3" fill="none" stroke={ink} strokeWidth="2" />
    </svg>
  </>
);

const Logo = ({ bg, children }: { bg: string; children: React.ReactNode }) => (
  <svg width="96" height="96" viewBox="0 0 96 96" fill="#fff" aria-hidden="true">
    <rect width="96" height="96" rx="13" fill={bg} />
    {children}
  </svg>
);

const brokers = [
  {
    name: "Paper Trading",
    note: "TradingView提供のブローカーシミュレーター",
    logo: (
      <Logo bg={ink}>
        <g transform="translate(17 32) scale(1.72)">
          <path d="M14 18H7V7H0V0h14v18zM28 18h-8l7.500-18h8z" />
          <circle cx="20" cy="4" r="4" />
        </g>
      </Logo>
    ),
  },
  {
    name: "FOREX.com",
    score: "4.5",
    featured: true,
    logo: (
      <Logo bg="#18984f">
        <path fillRule="evenodd" d="M46 22c16 0 27 11 27 26S62 74 46 74 19 63 19 48s11-26 27-26zm0 6c-8 0-12 8-12 20s4 19 12 19 13-7 13-19-5-20-13-20z" />
        <path d="M49 42h31l-1 4H48zM48 51h31l-1 4H47z" />
      </Logo>
    ),
  },
  {
    name: "OANDA",
    score: "4.5",
    picked: true,
    logo: (
      <Logo bg="#00204a">
        <path d="M18 43h10l3 18h-7zM32 50h9l4 13 8-31h8L50 77H40zM69 19h9l-8 27h-9z" />
      </Logo>
    ),
  },
  {
    name: "AMP",
    score: "4.5",
    logo: (
      <Logo bg="#51a5e1">
        <circle cx="49" cy="38" r="8.500" />
        <path d="M10 30l6 3 3 6c8 6 14 10 21 11h18c7-1 13-5 21-11l3-6 6-3-2 9c-8 8-18 16-26 22-3 6-6 10-12 11-4 1-5-4-6-11-8-7-22-14-30-22z" />
      </Logo>
    ),
  },
  {
    name: "TradeStation",
    score: "4.4",
    logo: (
      <Logo bg="#f0f3fa">
        <path fill="#0b88fb" d="M22 34c0-7 4-12 11-12h20L41 56c-7-7-8-14-4-22zM58 22h17c-1 8-4 12-10 12H54zM53 40c6 6 8 12 7 18-1 10-8 17-20 18z" />
      </Logo>
    ),
  },
];

const ranges = ["1日", "5日", "1ヶ月", "3ヶ月", "6ヶ月", "年初来", "1年", "5年", "すべて"];

/* ---------- page ---------- */

export default function App() {
  return (
    <>
      <GlobalStyle />
      <Shell>
        <TopBar>
          <AvatarButton type="button" aria-label="メニュー">
            <svg width="56" height="56" viewBox="0 0 56 56" aria-hidden="true">
              <circle cx="28" cy="28" r="28" fill="#10162a" />
              <circle cx="28" cy="28" r="17" fill="#17212b" />
              <path d="M44 22c3 12-4 23-19 23 12-1 20-8 19-23z" fill="#e8d5d8" />
            </svg>
            <Badge>5</Badge>
          </AvatarButton>
          <BarButton type="button" $w={192} $gap={7} $latin $strong>
            <Icon w={30} sw={3} d="M20 20l9 9">
              <circle cx="12" cy="12" r="10" />
            </Icon>
            EURJPY
          </BarButton>
          <BarButton type="button" $w={90} aria-label="比較">
            <Icon w={40} d="M20 11v18M11 20h18">
              <circle cx="20" cy="20" r="18" />
            </Icon>
          </BarButton>
          <BarDivider />
          <BarButton type="button" $w={98}>5分</BarButton>
          <BarDivider />
          <BarButton type="button" $w={88} aria-label="ローソク足">
            <Icon w={30} h={40} d="M7 0v7M7 34v6M24 6v7M24 28v6">
              <rect x="2" y="7" width="10" height="27" />
              <rect x="19" y="13" width="9" height="15" />
            </Icon>
          </BarButton>
          <BarDivider />
          <BarButton type="button" $w={296} $gap={12}>
            <Icon w={36} h={38} d="M1 37V28h9V22h9v5h8V16h8v21zM10 28v9M19 27v10M27 27v10M1 15l10-8 8 4L35 1" />
            インジケーター
          </BarButton>
          <BarButton type="button" $w={30} aria-label="お気に入りインジケーター">
            <Chevron />
          </BarButton>
          <BarButton type="button" $w={86} aria-label="テンプレート">
            <Icon w={32}>
              <rect x="1" y="1" width="12" height="12" rx="3" />
              <rect x="19" y="1" width="12" height="12" rx="3" />
              <rect x="1" y="19" width="12" height="12" rx="3" />
              <rect x="19" y="19" width="12" height="12" rx="3" />
            </Icon>
          </BarButton>
          <LetterGroup>
            <LetterButton type="button">A</LetterButton>
            <LetterButton type="button">E</LetterButton>
          </LetterGroup>
          <BarDivider />
          <BarButton type="button" $w={208} $gap={12}>
            <Icon w={40} h={42} d="M23 37A16 16 0 1 1 36 22M20 11v10h-7M1 10l8-8M31 2l8 8M32 26v16M24 34h16" />
            アラート
          </BarButton>
          <BarButton type="button" $w={206} $gap={12}>
            <Icon w={32} h={26} d="M14 2v22L2 13zM30 2v22L18 13z" />
            リプレイ
          </BarButton>
          <BarDivider />
          <BarButton type="button" $w={88} aria-label="元に戻す">
            <Icon w={28} h={22} d="M9 1 2 8l7 7M2 8h13c7 0 11 5 11 13" />
          </BarButton>
          <BarButton type="button" $w={64} aria-label="やり直す">
            <Icon w={28} h={22} color="#b2b5be" d="M19 1l7 7-7 7M26 8H13C6 8 2 13 2 21" />
          </BarButton>
          <BarSpace />
          <BarButton type="button" $w={88} aria-label="レイアウト">
            <Icon w={38} h={34} d="M19 1v32">
              <rect x="1" y="1" width="36" height="32" rx="4" />
            </Icon>
          </BarButton>
          <BarButton type="button" $w={116} $latin>OANDA</BarButton>
          <BarButton type="button" $w={56} aria-label="レイアウト管理">
            <Chevron />
          </BarButton>
          <BarDivider />
          <BarButton type="button" $w={82} aria-label="クイック検索">
            <Icon w={36} h={42} d="M12 7A14 14 0 1 0 28 25M25 31l10 10M24 2 14 16h7v10l10-14h-8z" />
          </BarButton>
          <BarButton type="button" $w={72} aria-label="設定">
            <Icon w={40} h={36} d="M11 1h18l10 17-10 17H11L1 18z">
              <circle cx="20" cy="18" r="7" />
            </Icon>
          </BarButton>
          <BarButton type="button" $w={80} aria-label="フルスクリーン">
            <Icon w={32} d="M1 10V4a3 3 0 0 1 3-3h6M22 1h6a3 3 0 0 1 3 3v6M31 22v6a3 3 0 0 1-3 3h-6M10 31H4a3 3 0 0 1-3-3v-6" />
          </BarButton>
          <BarButton type="button" $w={70} aria-label="スナップショット">
            <Icon w={42} h={34} d="M1 9a3 3 0 0 1 3-3h9l4-5h8l4 5h9a3 3 0 0 1 3 3v21a3 3 0 0 1-3 3H4a3 3 0 0 1-3-3z">
              <circle cx="21" cy="19" r="8" />
            </Icon>
          </BarButton>
          <PublishButton type="button">投稿</PublishButton>
        </TopBar>

        <Body>
          <SideBar $side="left" aria-label="描画ツール">
            {tools.map((tool, i) => (
              <React.Fragment key={tool.label}>
                <ToolButton type="button" aria-label={tool.label} $h={72} $active={tool.on} $end={i === tools.length - 1}>
                  <ToolFace $on={tool.on}>{tool.icon}</ToolFace>
                </ToolButton>
                {tool.rule && <SideDivider $w={72} />}
              </React.Fragment>
            ))}
          </SideBar>

          <Center>
            <Charts>
              <ChartPane
                selected
                model={euro}
                axis={124}
                flag="eu"
                name="ユーロ／円 · 5 · OANDA"
                values={[["始値", "163.662"], ["高値", "163.700"], ["安値", "163.655"], ["終値", "163.661"]]}
                change="−0.001 (−0.00%)"
              />
              <ChartPane
                model={dollar}
                axis={112}
                flag="us"
                name="米ドル／円 · 5 · OANDA"
                values={[["始値", "151.42"], ["高値", "151.46"], ["安値", "151.41"], ["終値", "151.44"]]}
                change="+0.02 (+0.02%)"
              />
            </Charts>

            <RangeBar>
              <RangeList>
                {ranges.map((range) => (
                  <button type="button" key={range}>{range}</button>
                ))}
              </RangeList>
              <RangeDivider $before={20} $after={26} />
              <button type="button" aria-label="日付へ移動">
                <Icon w={40} h={38} d="M4 19V8a3 3 0 0 1 3-3h28a3 3 0 0 1 3 3v26a3 3 0 0 1-3 3H21M4 13h34M14 0v8M28 0v8M1 30h15M9 23l7 7-7 7" />
              </button>
              <BarSpace />
              <button type="button">01:30:43 (UTC+9)</button>
              <RangeDivider $before={20} $after={24} />
              <button type="button" aria-label="最大化">
                <Icon w={28} d="M17 1h10v10M1 17v10h10" />
              </button>
            </RangeBar>

            <Panel>
              <PanelTabs>
                <PanelTab type="button" $first>株式スクリーナー</PanelTab>
                <TabArrow type="button" aria-label="スクリーナーの種類">
                  <Chevron />
                </TabArrow>
                <PanelTab type="button">Pine エディタ</PanelTab>
                <PanelTab type="button">ストラテジーテスター</PanelTab>
                <PanelTab type="button" $current>トレードパネル</PanelTab>
                <PanelTools>
                  <button type="button" aria-label="最小化">
                    <Icon w={28} h={32} d="M0 30h28" />
                  </button>
                  <button type="button" aria-label="パネルを最大化">
                    <Icon w={32} d="M1 11V5a4 4 0 0 1 4-4h22a4 4 0 0 1 4 4v6M1 21v6a4 4 0 0 0 4 4h22a4 4 0 0 0 4-4v-6" />
                  </button>
                </PanelTools>
              </PanelTabs>
              <Intro>
                ブローカーに接続してチャート上からダイレクトにトレード <a href="#brokers">弊社サポートのブローカー</a>{" "}
                そしてそのオファーについて見てみましょう。
              </Intro>
              <Brokers id="brokers">
                {brokers.map((broker) => (
                  <BrokerCard key={broker.name} $picked={broker.picked}>
                    {broker.featured && <Featured>注目</Featured>}
                    {broker.logo}
                    <BrokerName>{broker.name}</BrokerName>
                    {broker.note && <BrokerNote>{broker.note}</BrokerNote>}
                    {broker.score && (
                      <Rating>
                        <RatingValue>{broker.score}</RatingValue>
                        <Stars />
                      </Rating>
                    )}
                    {broker.picked && (
                      <>
                        <Favourite width="30" height="30" viewBox="0 0 24 24" fill="#ffa938" aria-hidden="true">
                          <path d={starPath} />
                        </Favourite>
                        <Highlight />
                      </>
                    )}
                  </BrokerCard>
                ))}
              </Brokers>
              <ScrollThumb />
            </Panel>
          </Center>

          <SideBar $side="right" aria-label="ウィジェット">
            {widgets.map((widget) => (
              <React.Fragment key={widget.label}>
                <ToolButton type="button" aria-label={widget.label} $h={widget.h} $end={widget.end}>
                  {widget.icon}
                </ToolButton>
                {widget.rule && <SideDivider $w={66} />}
              </React.Fragment>
            ))}
          </SideBar>
        </Body>
      </Shell>
    </>
  );
}
